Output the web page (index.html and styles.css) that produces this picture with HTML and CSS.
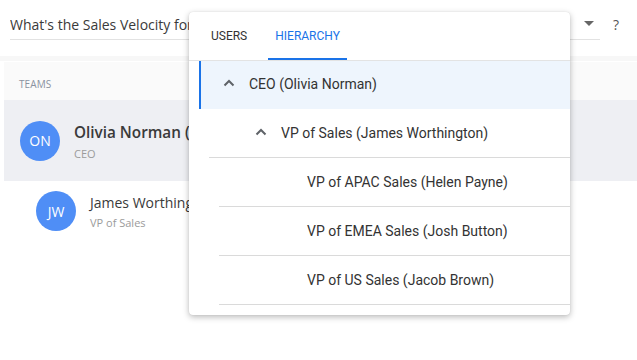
FILE: index.html
```html
<!DOCTYPE html>
<html>
<head>
<meta charset="utf-8">
<link rel="stylesheet" href="styles.css">
</head>
<body>
<div class="page">
  <div class="topbar">
    <div class="query">
      <span class="query-text">What's the Sales Velocity for Olivia Norman's team?</span>
      <span class="caret"></span>
    </div>
    <span class="help">?</span>
  </div>
  <div class="strip"></div>
  <div class="main">
    <div class="panel">
      <div class="panel-head">TEAMS</div>
      <div class="team-row selected">
        <div class="avatar">ON</div>
        <div class="who">
          <div class="name big">Olivia Norman (CEO)</div>
          <div class="role">CEO</div>
        </div>
      </div>
    </div>
    <div class="team-row child">
      <div class="avatar">JW</div>
      <div class="who">
        <div class="name">James Worthington</div>
        <div class="role">VP of Sales</div>
      </div>
    </div>
  </div>

  <div class="dropdown">
    <div class="tabs">
      <div class="tab">USERS</div>
      <div class="tab active">HIERARCHY</div>
    </div>
    <div class="tree">
      <div class="node lvl1 current">
        <svg class="chev" width="12" height="8" viewBox="0 0 12 8"><path d="M1.5 6.5 L6 2 L10.5 6.5" fill="none" stroke="#5f6368" stroke-width="2"/></svg>
        <span>CEO (Olivia Norman)</span>
      </div>
      <div class="branch">
        <div class="node lvl2">
          <svg class="chev" width="12" height="8" viewBox="0 0 12 8"><path d="M1.5 6.5 L6 2 L10.5 6.5" fill="none" stroke="#5f6368" stroke-width="2"/></svg>
          <span>VP of Sales (James Worthington)</span>
        </div>
        <div class="branch">
          <div class="node lvl3"><span>VP of APAC Sales (Helen Payne)</span></div>
          <div class="node lvl3"><span>VP of EMEA Sales (Josh Button)</span></div>
          <div class="node lvl3"><span>VP of US Sales (Jacob Brown)</span></div>
        </div>
      </div>
    </div>
  </div>
</div>
</body>
</html>
```

FILE: styles.css
```css
* { box-sizing: border-box; }
html, body { margin: 0; padding: 0; background: #fff; }
body { font-family: "Open Sans", "Liberation Sans", sans-serif; color: #333; width: 637px; height: 360px; overflow: hidden; }

.page { position: relative; width: 637px; height: 360px; }

.topbar { display: flex; align-items: flex-start; height: 56px; padding: 0 0 0 10px; }
.query { display: flex; align-items: center; width: 590px; height: 30px; margin-top: 10px; border-bottom: 1px solid #e2e2e2; }
.query-text { font-size: 14px; color: #3a3a3a; flex: 1; white-space: nowrap; overflow: hidden; }
.caret { width: 0; height: 0; border-left: 5px solid transparent; border-right: 5px solid transparent; border-top: 5px solid #666; margin-right: 6px; margin-top: -2px; }
.help { font-size: 14px; color: #555; margin-left: 13px; margin-top: 15px; line-height: 20px; }

.strip { height: 5px; background: #f7f7f7; }
.main { padding-top: 1px; }
.panel { margin-left: 4px; }
.panel-head { height: 38px; display: flex; align-items: center; padding-left: 15px; padding-top: 5px; font-size: 10px; color: #8a92a0; background: #fafafa; letter-spacing: 0.1px; }
.team-row { display: flex; align-items: center; }
.team-row.selected { background: #eeeff3; height: 81px; padding-left: 16px; }
.team-row.child { height: 60px; padding-left: 36px; }
.avatar { width: 40px; height: 40px; border-radius: 50%; background: #4f8ef6; color: #fff; font-size: 14px; display: flex; align-items: center; justify-content: center; flex: none; }
.who { margin-left: 14px; }
.name { font-size: 14px; color: #3a3a3a; white-space: nowrap; line-height: 20px; }
.name.big { font-size: 15.3px; font-weight: 600; line-height: 22px; margin-top: 0px; }
.role { font-size: 11px; color: #9b9b9b; line-height: 15px; margin-top: 2px; }
.team-row.selected .role { margin-top: 3px; }

.dropdown { position: absolute; left: 189px; top: 12px; width: 381px; height: 303px; background: #fff; border-radius: 4px; box-shadow: 0 2px 6px rgba(0,0,0,0.28), 0 0 1px rgba(0,0,0,0.15); font-family: Roboto, "Liberation Sans", sans-serif; overflow: hidden; }
.tabs { display: flex; gap: 14px; padding-left: 15px; height: 49px; border-bottom: 1px solid #e3e3e3; }
.tab { padding: 0 7px; font-size: 12px; color: #333; display: flex; align-items: center; height: 100%; border-bottom: 2px solid transparent; padding-top: 1px; }
.tab.active { color: #1a73e8; border-bottom-color: #1a73e8; }

.tree { padding-left: 10px; }
.branch { margin-left: 10px; }
.node { display: flex; align-items: center; font-size: 14px; color: #333; height: 49px; border-bottom: 1px solid #dadada; padding-bottom: 1px; }
.node.lvl1 { height: 48px; border-bottom: none; padding-left: 22px; padding-bottom: 2px; }
.node.current { background: #eef5fd; border-left: 2px solid #1a73e8; }
.node.lvl2 { padding-left: 46px; }
.node.lvl3 { padding-left: 88px; }
.chev { flex: none; margin-right: 14px; margin-top: -2px; }
```
